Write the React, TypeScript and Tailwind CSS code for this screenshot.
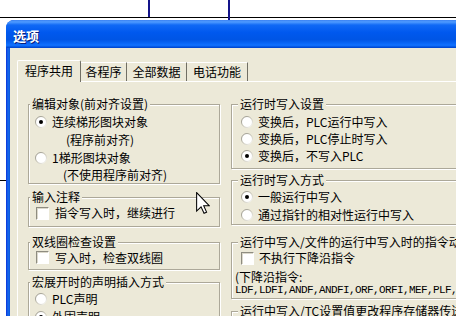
import { ReactNode } from 'react';

type GroupProps = {
  title: string;
  className?: string;
  legendClass?: string;
  children: ReactNode;
};

function Group({ title, className = '', legendClass = '', children }: GroupProps) {
  return (
    <fieldset
      className={`border border-[#ACA899] shadow-[inset_1px_1px_0_#fff,1px_1px_0_#fff] ${className}`}
    >
      <legend
        className={`bg-[#ECE9D8] px-[2px] leading-[14px] whitespace-nowrap ${legendClass}`}
      >
        {title}
      </legend>
      {children}
    </fieldset>
  );
}

function Radio({ checked = false }: { checked?: boolean }) {
  return (
    <svg width="12" height="12" viewBox="0 0 12 12" className="shrink-0">
      <defs>
        <linearGradient id="radioEdge" x1="0" y1="0" x2="1" y2="1">
          <stop offset="0" stopColor="#8d8b80" />
          <stop offset="0.55" stopColor="#c4c1b3" />
          <stop offset="1" stopColor="#ffffff" />
        </linearGradient>
      </defs>
      <circle cx="6" cy="6" r="5.5" fill="#fff" stroke="url(#radioEdge)" />
      {checked && <circle cx="6" cy="6" r="2" fill="#000" />}
    </svg>
  );
}

function Check() {
  return (
    <span className="block w-[13px] h-[13px] shrink-0 bg-white border border-t-[#8e8c80] border-l-[#8e8c80] border-r-white border-b-white shadow-[inset_1px_1px_0_#dcd9cc]" />
  );
}

export default function App() {
  return (
    <div className="relative w-[456px] h-[316px] overflow-hidden bg-white font-['Noto_Sans_CJK_SC',sans-serif] text-[12px] text-black">
      {/* desktop lines behind the dialog */}
      <div className="absolute left-0 top-[17px] w-full h-px bg-black" />
      <div className="absolute left-[148px] top-0 w-[2px] h-[17px] bg-[#14148a]" />
      <div className="absolute left-[228px] top-0 w-[2px] h-[20px] bg-[#14148a]" />
      <div className="absolute left-0 top-[180px] w-[6px] h-px bg-black" />

      {/* dialog window */}
      <div className="absolute left-[6px] top-[20px] w-[480px] h-[310px] flex flex-col rounded-tl-[8px] overflow-hidden bg-[#0855DD]">
        <div className="h-[28px] shrink-0 flex items-center pl-[7px] pt-[3px] bg-[linear-gradient(180deg,#3b82f2_0%,#4f9bff_7%,#1069f5_18%,#0058ee_45%,#0055e5_70%,#0a68f8_84%,#1272ff_90%,#0050dd_97%,#003fc4_100%)]">
          <span className="text-white font-bold text-[13px] leading-none [text-shadow:1px_1px_0_#0a1e7a]">
            选项
          </span>
        </div>
        <div className="flex-1 flex">
          <div className="w-[4px] shrink-0 bg-[linear-gradient(90deg,#0831d9,#166aee_50%,#0855dd)]" />
          <div className="flex-1 flex flex-col bg-[#ECE9D8] pt-[12px] pl-[7px]">
            {/* tabs */}
            <div className="relative z-10 flex items-end h-[21px]">
              <div className="h-[22px] w-[64px] -mb-px bg-[#ECE9D8] border-t border-l border-white border-r border-r-[#716F64] rounded-t-[2px] flex items-center justify-center pb-[2px]">
                程序共用
              </div>
              <div className="h-[19px] w-[46px] border-t border-white border-r border-r-[#716F64] flex items-center justify-center">
                各程序
              </div>
              <div className="h-[19px] w-[60px] border-t border-white border-r border-r-[#716F64] flex items-center justify-center">
                全部数据
              </div>
              <div className="h-[19px] w-[61px] border-t border-white border-r border-r-[#716F64] flex items-center justify-center">
                电话功能
              </div>
            </div>

            {/* tab page */}
            <div className="flex-1 border-t border-l border-white flex gap-[11px] pl-[10px] pt-[15px]">
              <div className="w-[192px] shrink-0 flex flex-col">
                <Group title="编辑对象(前对齐设置)" legendClass="ml-[1px]">
                  <div className="pt-[2px]">
                    <div className="h-[18px] flex items-center pl-[6px] gap-[5px]">
                      <Radio checked />
                      <span>连续梯形图块对象</span>
                    </div>
                    <div className="h-[18px] flex items-center pl-[37px]">(程序前对齐)</div>
                    <div className="h-[18px] flex items-center pl-[6px] gap-[5px]">
                      <Radio />
                      <span>1梯形图块对象</span>
                    </div>
                    <div className="h-[16px] flex items-center pl-[34px]">(不使用程序前对齐)</div>
                  </div>
                </Group>

                <Group title="输入注释" className="mt-[6px]" legendClass="ml-[1px]">
                  <div className="h-[18px] flex items-center pl-[7px] gap-[6px] mb-[4px]">
                    <Check />
                    <span>指令写入时，继续进行</span>
                  </div>
                </Group>

                <Group title="双线圈检查设置" className="mt-[8px]" legendClass="ml-[1px]">
                  <div className="h-[17px] flex items-center pl-[7px] gap-[6px] mb-[3px]">
                    <Check />
                    <span>写入时，检查双线圈</span>
                  </div>
                </Group>

                <Group title="宏展开时的声明插入方式" className="mt-[5px]" legendClass="ml-[1px]">
                  <div className="pt-[1px]">
                    <div className="h-[18px] flex items-center pl-[6px] gap-[5px]">
                      <Radio />
                      <span>PLC声明</span>
                    </div>
                    <div className="h-[18px] flex items-center pl-[6px] gap-[5px]">
                      <Radio checked />
                      <span>外围声明</span>
                    </div>
                  </div>
                </Group>
              </div>

              <div className="w-[320px] shrink-0 flex flex-col">
                <Group title="运行时写入设置" legendClass="ml-[6px]">
                  <div className="pt-[2px] pb-[4px]">
                    <div className="h-[17px] flex items-center pl-[9px] gap-[5px]">
                      <Radio />
                      <span>变换后，PLC运行中写入</span>
                    </div>
                    <div className="h-[17px] flex items-center pl-[9px] gap-[5px]">
                      <Radio />
                      <span>变换后，PLC停止时写入</span>
                    </div>
                    <div className="h-[17px] flex items-center pl-[9px] gap-[5px]">
                      <Radio checked />
                      <span>变换后，不写入PLC</span>
                    </div>
                  </div>
                </Group>

                <Group title="运行时写入方式" className="mt-[4px]" legendClass="ml-[6px]">
                  <div className="pt-[1px]">
                    <div className="h-[18px] flex items-center pl-[9px] gap-[5px]">
                      <Radio checked />
                      <span>一般运行中写入</span>
                    </div>
                    <div className="h-[18px] flex items-center pl-[9px] gap-[5px]">
                      <Radio />
                      <span>通过指针的相对性运行中写入</span>
                    </div>
                  </div>
                </Group>

                <Group
                  title="运行中写入/文件的运行中写入时的指令动作"
                  className="mt-[10px]"
                  legendClass="ml-[6px]"
                >
                  <div className="pb-[2px]">
                    <div className="h-[18px] flex items-center pl-[9px] gap-[5px]">
                      <Check />
                      <span>不执行下降沿指令</span>
                    </div>
                    <div className="h-[13px] mt-[3px] flex items-center pl-[3px] leading-[13px]">
                      (下降沿指令:
                    </div>
                    <div className="h-[12px] mt-[1px] flex items-center pl-[3px] whitespace-nowrap font-['Liberation_Mono',monospace] text-[11px] tracking-[-0.6px] leading-[12px]">
                      LDF,LDFI,ANDF,ANDFI,ORF,ORFI,MEF,PLF,
                    </div>
                  </div>
                </Group>

                <Group
                  title="运行中写入/TC设置值更改程序存储器传送时的指令动作"
                  className="mt-[5px]"
                  legendClass="ml-[6px]"
                >
                  <div className="h-[18px]" />
                </Group>
              </div>
            </div>
          </div>
        </div>
      </div>

      {/* mouse pointer */}
      <svg
        className="absolute left-[196px] top-[192px]"
        width="14"
        height="22"
        viewBox="0 0 12 19"
      >
        <path
          d="M0.5 0.5V16.5L4.3 12.8L6.9 18.4L9.1 17.4L6.6 11.9H11.5Z"
          fill="#fff"
          stroke="#000"
          strokeWidth="0.9"
          strokeLinejoin="miter"
        />
      </svg>
    </div>
  );
}
